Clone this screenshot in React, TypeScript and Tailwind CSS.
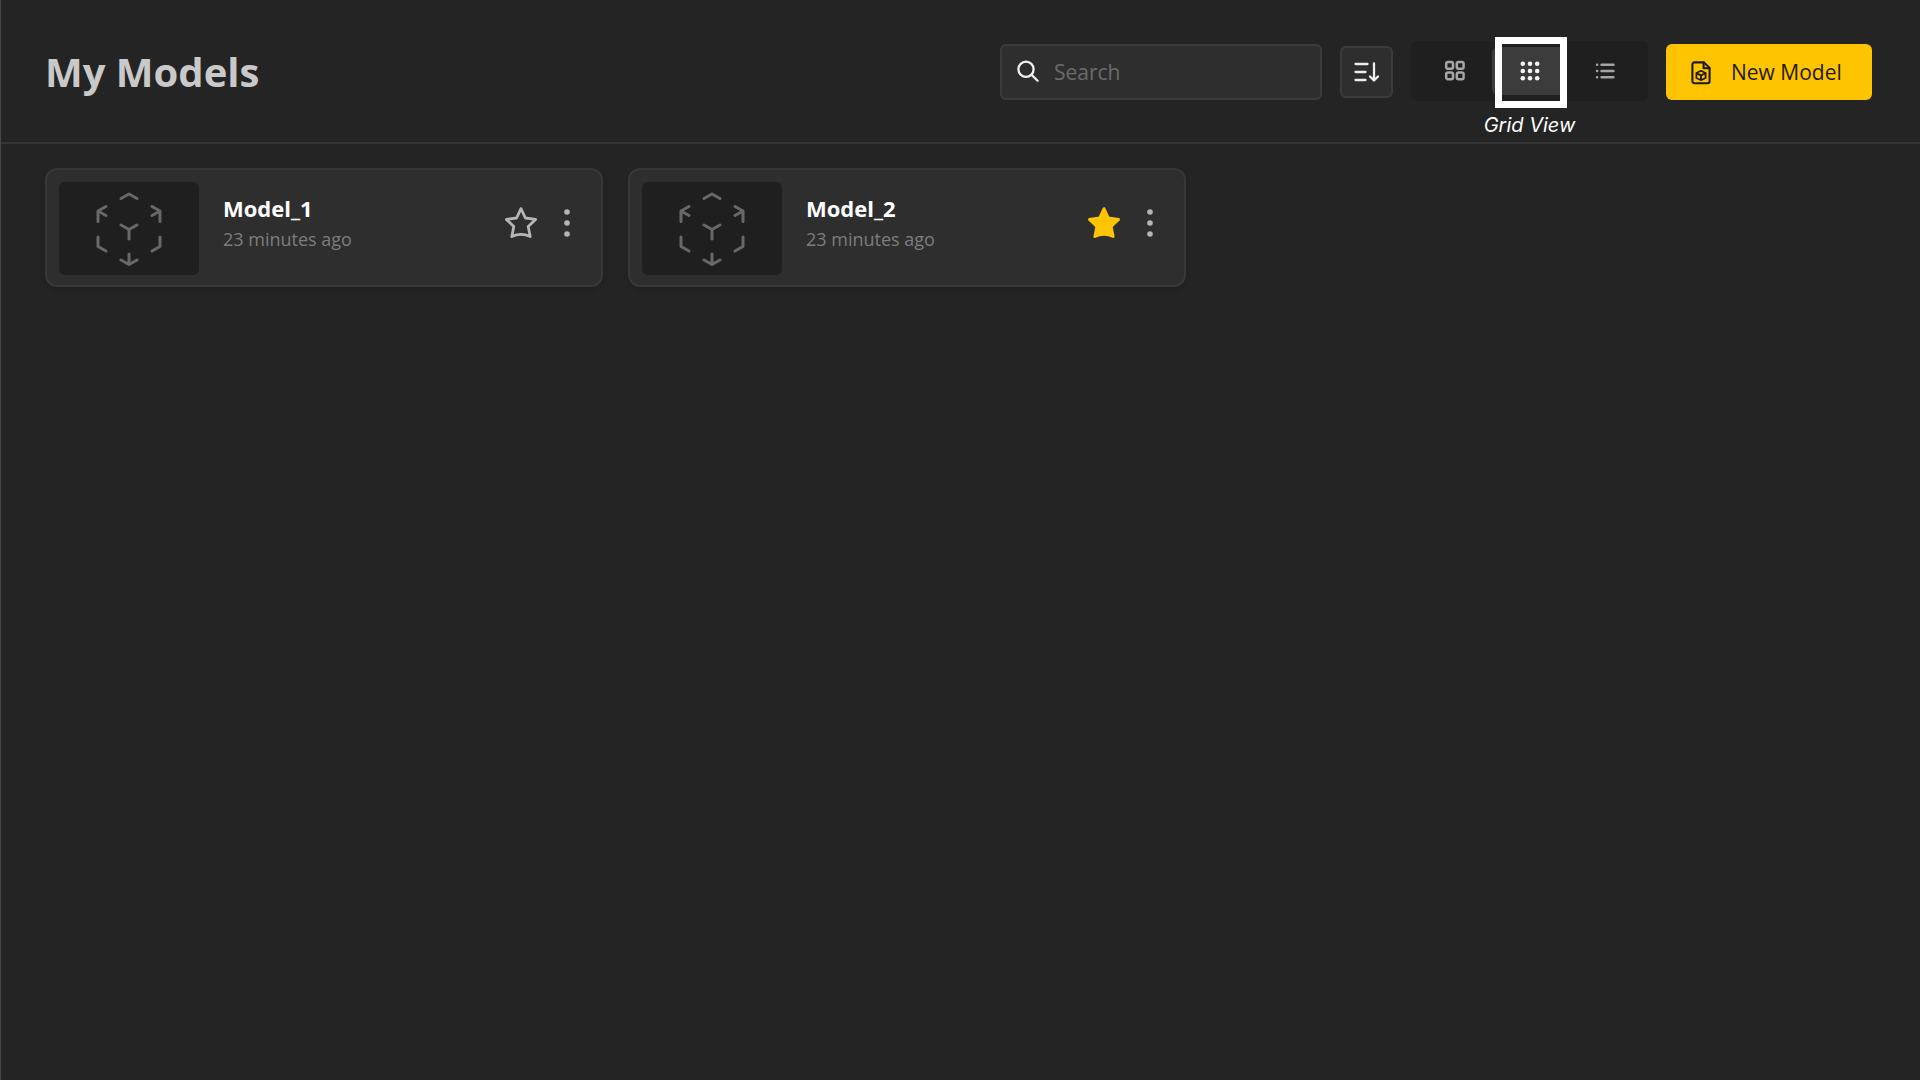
import React, { useState } from "react";

const SearchIcon = () => (
  <svg className="h-6 w-6 shrink-0" viewBox="0 0 24 24" fill="none" stroke="#f0f0f0" strokeWidth="2.3" strokeLinecap="round" aria-hidden="true">
    <circle cx="10" cy="9.2" r="7.6" />
    <path d="M15.6 14.9 21.6 20.8" />
  </svg>
);

const SortIcon = () => (
  <svg className="h-7 w-7" viewBox="0 0 28 28" fill="none" stroke="#eeeeee" strokeWidth="2.3" strokeLinecap="round" strokeLinejoin="round" aria-hidden="true">
    <path d="M2.5 6H14.5M2.5 14H12.5M2.5 22H12.5M21 5.5V22M17 18.5 21 22.5 25 18.5" />
  </svg>
);

const TilesIcon = () => (
  <svg className="h-6 w-6" viewBox="0 0 24 24" fill="none" stroke="#a6a6a6" strokeWidth="2.5" aria-hidden="true">
    <rect x="3.2" y="3" width="6.8" height="6.8" rx="1.8" />
    <rect x="13.8" y="3" width="6.8" height="6.8" rx="1.8" />
    <rect x="3.2" y="13.4" width="6.8" height="6.8" rx="1.8" />
    <rect x="13.8" y="13.4" width="6.8" height="6.8" rx="1.8" />
  </svg>
);

const DotsGridIcon = () => (
  <svg className="h-6 w-6" viewBox="0 0 24 24" fill="#f5f5f5" aria-hidden="true">
    {[4.8, 12, 19.2].map((y) => [4.8, 12, 19.2].map((x) => <circle key={`${x}-${y}`} cx={x} cy={y} r="2.3" />))}
  </svg>
);

const ListIcon = () => (
  <svg className="h-6 w-6" viewBox="0 0 24 24" fill="none" stroke="#a3a3a3" strokeWidth="2.4" strokeLinecap="round" aria-hidden="true">
    <path d="M8.5 5.7H20.5M8.5 12H20.5M8.5 18.3H20.5M4 5.7H4.2M4 12H4.2M4 18.3H4.2" />
  </svg>
);

const FileCubeIcon = () => (
  <svg className="h-6 w-6 shrink-0" viewBox="0 0 24 24" fill="none" stroke="#1f1a00" strokeWidth="2.1" strokeLinecap="round" strokeLinejoin="round" aria-hidden="true">
    <path d="M5.4 1.4H15L20.6 7V20.2A2 2 0 0 1 18.6 22.2H5.4A2 2 0 0 1 3.4 20.2V3.4A2 2 0 0 1 5.4 1.4Z" />
    <path d="M14.6 1.6V7.2H20.4" />
    <path d="M12 9.8 16.6 12V17L12 19.2 7.4 17V12ZM7.6 12.2 12 14.4 16.4 12.2M12 14.4V19" strokeWidth="1.8" />
  </svg>
);

const CubeIcon = () => (
  <svg className="h-20 w-18" viewBox="0 0 72 80" fill="none" stroke="#686868" strokeWidth="3" strokeLinecap="round" strokeLinejoin="round" aria-hidden="true">
    <path d="M28 9.5 36 5 44 9.5" />
    <path d="M5 32.5V22L13 17.5M5 22 13 26.5" />
    <path d="M67 32.5V22L59 17.5M67 22 59 26.5" />
    <path d="M28 36 36 40.5 44 36M36 40.5V50" />
    <path d="M5 48V57.5L13 62M67 48V57.5L59 62" />
    <path d="M36 65V75.5M28 71 36 75.5 44 71" />
  </svg>
);

const StarIcon = ({ filled }: { filled: boolean }) => (
  <svg className="h-9 w-9" viewBox="0 0 36 36" fill={filled ? "#ffc400" : "none"} stroke={filled ? "#ffc400" : "#b5b5b5"} strokeWidth="2.8" strokeLinejoin="round" aria-hidden="true">
    <path d="M18 3.6 22.4 13 32.6 14.4 25.2 21.4 27.2 31.6 Q18 27.2 8.8 31.6 L10.8 21.4 3.4 14.4 13.6 13Z" />
  </svg>
);

const MoreIcon = () => (
  <svg className="h-9 w-6" viewBox="0 0 24 36" fill="#b5b5b5" aria-hidden="true">
    <circle cx="12" cy="7" r="2.8" />
    <circle cx="12" cy="18" r="2.8" />
    <circle cx="12" cy="29" r="2.8" />
  </svg>
);

type Model = { name: string; edited: string; starred: boolean };

const initialModels: Model[] = [
  { name: "Model_1", edited: "23 minutes ago", starred: false },
  { name: "Model_2", edited: "23 minutes ago", starred: true },
];

function ModelCard({ model, onStar }: { model: Model; onStar: () => void }) {
  return (
    <article className="flex items-start rounded-xl border-2 border-[#383838] bg-[#2e2e2e] px-3 pt-3 pb-2.5 shadow-md shadow-black/10">
      <div className="flex h-[93px] w-[140px] shrink-0 items-center justify-center rounded-md bg-[#1f1f1f]">
        <CubeIcon />
      </div>
      <div className="ml-6 min-w-0 flex-1 pt-3">
        <h2 className="truncate text-[22px] leading-7 font-bold text-white">{model.name}</h2>
        <p className="truncate text-[18px] leading-[34px] text-[#7d7d7d]">{model.edited}</p>
      </div>
      <div className="mr-2.5 flex items-center gap-4 pt-[23px]">
        <button type="button" aria-label={`Star ${model.name}`} aria-pressed={model.starred} onClick={onStar}>
          <StarIcon filled={model.starred} />
        </button>
        <button type="button" aria-label={`More options for ${model.name}`}>
          <MoreIcon />
        </button>
      </div>
    </article>
  );
}

export default function App() {
  const [models, setModels] = useState(initialModels);
  const toggle = (name: string) =>
    setModels((list) => list.map((m) => (m.name === name ? { ...m, starred: !m.starred } : m)));

  return (
    <div className="min-h-screen border-l border-[#484848] bg-[#242424] font-['Open_Sans','Noto_Sans',sans-serif]">
      <header className="flex h-36 items-center justify-between border-b-2 border-[#353535] pt-0.5 pr-12 pl-11">
        <h1 className="text-[40px] leading-[56px] font-bold text-[#c9c9c9]">My Models</h1>
        <div className="flex items-center gap-[18px]">
          <label className="flex h-14 w-[322px] items-center gap-3.5 rounded-md border-2 border-[#3b3b3b] bg-[#2e2e2e] px-3.5">
            <SearchIcon />
            <input type="search" aria-label="Search" placeholder="Search" className="min-w-0 flex-1 bg-transparent pt-0.5 text-[21px] text-white outline-none placeholder:text-[#6b6b6b]" />
          </label>
          <button type="button" aria-label="Sort" className="flex h-[52px] w-[53px] items-center justify-center rounded-md border-2 border-[#3b3b3b] bg-[#2e2e2e]">
            <SortIcon />
          </button>
          <div className="mb-0.5 flex h-[60px] items-center rounded-md bg-[#1f1f1f] px-1.5">
            <button type="button" aria-label="Tile view" className="flex h-12 w-[75px] items-center justify-center">
              <TilesIcon />
            </button>
            <div className="relative">
              <button type="button" aria-label="Grid view" aria-pressed="true" className="flex h-12 w-[75px] items-center justify-center rounded-md bg-[#3c3c3c]">
                <DotsGridIcon />
              </button>
              <div className="pointer-events-none absolute -top-2.5 right-0 h-[71px] w-[72px] border-7 border-white" />
              <span className="absolute top-full left-1/2 mt-4 -translate-x-1/2 font-['Inter','Open_Sans',sans-serif] text-[20px] leading-[28px] whitespace-nowrap text-white italic">Grid View</span>
            </div>
            <button type="button" aria-label="List view" className="flex h-12 w-[75px] items-center justify-center">
              <ListIcon />
            </button>
          </div>
          <button type="button" className="flex h-14 w-[206px] items-center gap-[18px] rounded-md bg-[#ffc400] pt-px pl-[23px] text-[21px] whitespace-nowrap text-[#1f1a00]">
            <FileCubeIcon />
            New Model
          </button>
        </div>
      </header>
      <main className="grid grid-cols-[repeat(auto-fill,558px)] gap-[25px] pt-6 pr-12 pl-11">
        {models.map((m) => (
          <ModelCard key={m.name} model={m} onStar={() => toggle(m.name)} />
        ))}
      </main>
    </div>
  );
}
